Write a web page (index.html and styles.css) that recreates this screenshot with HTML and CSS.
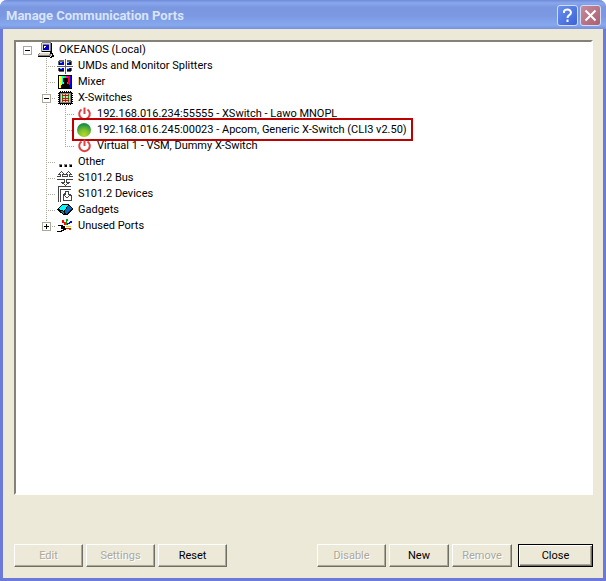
FILE: index.html
```html
<!DOCTYPE html>
<html lang="en">
<head>
<meta charset="utf-8">
<title>Manage Communication Ports</title>
<link rel="stylesheet" href="styles.css">
</head>
<body>
<main class="window">
  <header class="titlebar">
    <h1>Manage Communication Ports</h1>
    <button class="caption help" aria-label="Help"><svg width="19" height="19" viewBox="0 0 19 19"><path d="M6 7V5.500Q6.500 3.500 9.500 3.500T13 6.500Q13 8 11 9.300Q9.500 10.300 9.500 12M9.500 13.500V16"/></svg></button>
    <button class="caption close" aria-label="Close window"><svg width="19" height="19" viewBox="0 0 19 19"><path d="M4.500 4.500L14.500 14.500M14.500 4.500L4.500 14.500"/></svg></button>
  </header>
  <section class="content">
    <ul class="tree">
      <li>
        <div class="row"><span class="cell"><button class="expander" aria-label="Collapse">
          <svg width="9" height="9"><path d="M2 4h5v1H2z"/></svg></button></span>
          <svg class="icon" viewBox="0 0 16 16"><path fill="#848284" d="M3 1h1V0h9v1h1v9H3zM1 11h12v3H0v-2h1z"/><path fill="#ded7c6" d="M4 1h8v8H4zM2 11h10v1H2zM1 12h10v1H1z"/><path d="M13 1h1v9H4V9h9zM0 14h12v1H0zM12 10h2v1h1v2h1v2h-2v1h-2v-1h1v-3h-1z"/><path fill="#848284" d="M5 2h6v6H5z"/><path fill="#0000c8" d="M5 3h6v5H5z"/><path fill="#fff" d="M6 4h2v1H6zM6 5h1v1H6z"/><path fill="#ded7c6" d="M13 12h1v2h-1z"/></svg>
          <span>OKEANOS (Local)</span></div>
        <ul>
          <li><div class="row"><span class="cell stub"></span>
            <svg class="icon" viewBox="0 0 16 16"><path fill="#636163" d="M2 2h5v12H2v-1H1V3h1zM10 2h4v1h1v10h-1v1h-4z"/><path d="M2 4h5v3H2zM10 4h4v3h-4zM2 10h5v3H2zM10 10h4v3h-4z"/><path fill="#0000d8" d="M3 4h4v3H3zM10 4h3v3h-3zM3 10h4v2H3zM10 10h3v2h-3z"/><path fill="#6cf" d="M3 4h2v1H3zM10 4h2v1h-2zM3 10h2v1H3zM10 10h2v1h-2z"/><path fill="#fff" d="M7 1h3v15H7zM0 7h16v3H0z"/><path fill="#636163" d="M8 1h1v15H8zM0 8h16v1H0z"/></svg>
            <span>UMDs and Monitor Splitters</span></div></li>
          <li><div class="row"><span class="cell stub"></span>
            <svg class="icon" viewBox="0 0 16 16"><path d="M1 1h14v14H1z"/><path fill="#fff" d="M2 2h1v12H2z"/><path fill="#ff0" d="M3 2h2v12H3z"/><path fill="#0ff" d="M5 2h2v12H5z"/><path fill="#0f0" d="M7 2h2v12H7z"/><path fill="#f0f" d="M9 2h2v12H9z"/><path fill="red" d="M11 2h2v12h-2z"/><path fill="#00f" d="M13 2h1v12h-1z"/><path d="M6 4h5v4h-1v2h2v1h1v3H4v-3h1v-1h2V8H6z"/></svg>
            <span>Mixer</span></div></li>
          <li><div class="row"><span class="cell"><button class="expander" aria-label="Collapse">
            <svg width="9" height="9"><path d="M2 4h5v1H2z"/></svg></button></span>
            <svg class="icon" viewBox="0 0 16 16"><path fill="none" stroke="#000" stroke-dasharray="1 1" d="M3 1.500h12M3 14.500h12M1.500 3v12M15.500 3v12"/><path d="M2 2h13v12H2z"/><path fill="#848284" d="M3 3h11v10H3z"/><path fill="#ded7c6" d="M4 4h9v8H4z"/><path fill="#009a00" d="M5 4h1v8H5zM8 4h1v8H8zM11 4h1v8h-1z"/><path fill="#e00000" d="M5 5h7v1H5zM5 8h7v1H5zM5 10h7v1H5z"/></svg>
            <span>X-Switches</span></div>
            <ul>
              <li><div class="row"><span class="cell stub"></span>
                <svg class="icon smooth" viewBox="0 0 16 16"><path class="power" d="M5.500 3.500A5.300 5.300 0 1 0 11.500 3.500M8.500 1.500V8"/></svg>
                <span>192.168.016.234:55555 - XSwitch - Lawo MNOPL</span></div></li>
              <li class="marked"><div class="row"><span class="cell stub"></span>
                <svg class="icon smooth" viewBox="0 0 16 16"><defs><radialGradient id="ball" cx=".5" cy=".85" r=".75"><stop offset="0" stop-color="#b8d828"/><stop offset=".5" stop-color="#7cc02c"/><stop offset="1" stop-color="#1c9048"/></radialGradient></defs><circle cx="8" cy="8" r="7" fill="url(#ball)"/></svg>
                <span>192.168.016.245:00023 - Apcom, Generic X-Switch (CLI3 v2.50)</span></div></li>
              <li><div class="row"><span class="cell stub"></span>
                <svg class="icon smooth" viewBox="0 0 16 16"><path class="power" d="M5.500 3.500A5.300 5.300 0 1 0 11.500 3.500M8.500 1.500V8"/></svg>
                <span>Virtual 1 - VSM, Dummy X-Switch</span></div></li>
            </ul></li>
          <li><div class="row"><span class="cell stub"></span>
            <svg class="icon" viewBox="0 0 16 16"><path fill="#848284" d="M2 10h3v3H2zM7 10h3v3H7zM12 10h3v3h-3z"/><path d="M3 11h2v2H3zM8 11h2v2H8zM13 11h2v2h-2z"/></svg>
            <span>Other</span></div></li>
          <li><div class="row"><span class="cell stub"></span>
            <svg class="icon" viewBox="0 0 16 16"><path class="outline" d="M0 6.500h3.500V4.500H1.500l3-3 3 3H5.500v2h5v-2H8.500l3-3 3 3h-2v2H16M0 9.500h7.500v3H5l3.500 3 3.500-3H9.500v-3H16"/></svg>
            <span>S101.2 Bus</span></div></li>
          <li><div class="row"><span class="cell stub"></span>
            <svg class="icon" viewBox="0 0 16 16"><path class="outline" d="M1.500 0v16M3.500 16V3.500H14M1 .5h13M6.500 7.500v7h8v-5h-2M6.500 7.500h2v-2h3v3h2l-3.500 3.500L6.500 8.500h2"/></svg>
            <span>S101.2 Devices</span></div></li>
          <li><div class="row"><span class="cell stub"></span>
            <svg class="icon" viewBox="0 0 16 16"><path d="M6 2h6l4 5v1l-6 5H7L0 8V7z"/><path fill="#0ff" d="M6 3h5L7 9 1 7z"/><path fill="#0069b5" d="M12 3l3 4-6 5-1-3z"/><path fill="#008a94" d="M2 8l5 2v2z"/></svg>
            <span>Gadgets</span></div></li>
          <li><div class="row"><span class="cell"><button class="expander" aria-label="Expand">
            <svg width="9" height="9"><path d="M2 4h5v1H2zM4 2h1v5H4z"/></svg></button></span>
            <svg class="icon" viewBox="0 0 16 16"><path d="M1 7h5v1h2v2h1v2H7v1H5v1H0v-1h4v-1h2v-1H4V8H1z"/><path fill="red" d="M5 2h2v2h1v3H7V5H5zM9 10h5v1H9z"/><path fill="#00f" d="M13 3h2v2h-2v1h-2v1H9V6h1V5h2V4h1z"/><path fill="#0a0" d="M9 1h2v2h-1v4H8V4h1zM12 11h2v1h-2z"/><path fill="#fc0" d="M9 8h5v1H9z"/></svg>
            <span>Unused Ports</span></div></li>
        </ul>
      </li>
    </ul>
    <footer class="actions">
      <button class="btn" disabled>Edit</button>
      <button class="btn" disabled>Settings</button>
      <button class="btn">Reset</button>
      <span class="spacer"></span>
      <button class="btn" disabled>Disable</button>
      <button class="btn narrow">New</button>
      <button class="btn narrow" disabled>Remove</button>
      <button class="btn default">Close</button>
    </footer>
  </section>
</main>
</body>
</html>
```

FILE: styles.css
```css
*, *::before, *::after { box-sizing: border-box; }
body { margin: 0; background: #fff; font: 11px/16px Roboto, "Liberation Sans", sans-serif; color: #000; }
button { font: inherit; color: inherit; padding: 0; margin: 0; }
.window {
  display: flex;
  flex-direction: column;
  min-height: 100vh;
  border: solid #6b7ad8;
  border-width: 0 3px 3px;
  border-radius: 7px 7px 0 0;
  background: #ece9d8;
}
.titlebar {
  display: flex;
  align-items: center;
  gap: 2px;
  height: 29px;
  margin: 0 -3px;
  padding: 2px 5px 0 6px;
  border-radius: 7px 7px 0 0;
  background: linear-gradient(#7189d8 0, #88a8ee 3px, #7b97e0 7px, #7c98e2 16px, #86a9ee 25px, #7890dd 29px);
}
.titlebar h1 { flex: 1; margin: 0; font: bold 13px/20px Roboto, sans-serif; color: #d8e4f8; }
.caption {
  width: 21px;
  height: 21px;
  border: 1px solid #d2dcf6;
  border-radius: 3px;
}
.caption svg { display: block; fill: none; stroke: #fff; stroke-width: 2; }
.help { background: linear-gradient(135deg, #6a90ee, #3c62d8); }
.close { background: linear-gradient(135deg, #c58a9c, #ac5f70); }
.content { display: flex; flex: 1; flex-direction: column; padding: 11px 10px 11px 11px; }
ul { margin: 0; padding: 0; list-style: none; }
.tree {
  flex: 1;
  padding: 0 2px;
  margin-bottom: 49px;
  border: 2px solid;
  border-color: #848278 #fff #fff #848278;
  background: #fff;
}
.tree ul { padding-left: 19px; }
.tree li { position: relative; }
.tree ul > li::before {
  content: "";
  position: absolute;
  left: 9px;
  top: 0;
  bottom: 0;
  width: 1px;
  background: repeating-linear-gradient(#aca899 0 1px, transparent 1px 2px);
}
.tree ul > li:last-child::before { bottom: auto; height: 8px; }
.row { display: flex; align-items: center; height: 16px; white-space: nowrap; }
.cell { position: relative; display: flex; justify-content: center; align-items: center; width: 19px; height: 16px; margin-right: 1px; }
.tree ul .cell::before {
  content: "";
  position: absolute;
  left: 9px;
  right: 0;
  top: 8px;
  height: 1px;
  background: repeating-linear-gradient(90deg, #aca899 0 1px, transparent 1px 2px);
}
.expander { position: relative; width: 9px; height: 9px; border: 0; outline: 1px solid #aca899; outline-offset: -1px; background: #fff; }
.expander svg { display: block; }
.icon { width: 16px; height: 16px; margin-right: 5px; shape-rendering: crispEdges; }
.smooth { shape-rendering: auto; }
.power { fill: none; stroke: #e04040; stroke-width: 2; }
.outline { fill: none; stroke: #444; }
.marked::after {
  content: "";
  position: absolute;
  left: 16px;
  top: -4px;
  width: 341px;
  height: 23px;
  border: 2px solid #c00000;
}
.actions { display: flex; gap: 3px; }
.spacer { flex: 1; }
.btn {
  width: 69px;
  height: 23px;
  border: 1px solid;
  border-color: #fff #716f64 #716f64 #fff;
  background: #ece9d8;
  box-shadow: inset -1px -1px #aca899;
}
.narrow { width: 60px; }
.btn:disabled { color: #aca899; text-shadow: 1px 1px #fff; }
.default { width: 75px; margin-left: 3px; border-color: #000; box-shadow: inset 1px 1px #fff, inset -1px -1px #716f64, inset -2px -2px #aca899; }
```
